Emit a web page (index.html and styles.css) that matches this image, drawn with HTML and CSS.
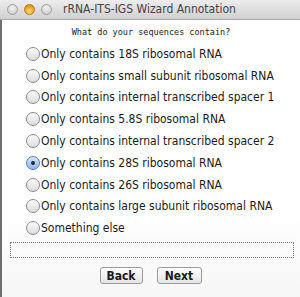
FILE: index.html
```html
<!DOCTYPE html>
<html lang="en">

<head>
    <meta charset="UTF-8">
    <title>rRNA-ITS-IGS Wizard Annotation</title>
    <link rel="stylesheet" href="styles.css">
</head>

<body>
    <div class="window">
        <div class="titlebar">
            <div class="lights">
                <span class="light"></span>
                <span class="light light-min"></span>
                <span class="light"></span>
            </div>
            <div class="title">rRNA-ITS-IGS Wizard Annotation</div>
        </div>
        <div class="content">
            <div class="question">What do your sequences contain?</div>
            <form class="choices">
                <label class="choice"><input type="radio" name="kind"><span class="radio"></span>Only contains 18S ribosomal RNA</label>
                <label class="choice"><input type="radio" name="kind"><span class="radio"></span>Only contains small subunit ribosomal RNA</label>
                <label class="choice"><input type="radio" name="kind"><span class="radio"></span>Only contains internal transcribed spacer 1</label>
                <label class="choice"><input type="radio" name="kind"><span class="radio"></span>Only contains 5.8S ribosomal RNA</label>
                <label class="choice"><input type="radio" name="kind"><span class="radio"></span>Only contains internal transcribed spacer 2</label>
                <label class="choice"><input type="radio" name="kind" checked><span class="radio"></span>Only contains 28S ribosomal RNA</label>
                <label class="choice"><input type="radio" name="kind"><span class="radio"></span>Only contains 26S ribosomal RNA</label>
                <label class="choice"><input type="radio" name="kind"><span class="radio"></span>Only contains large subunit ribosomal RNA</label>
                <label class="choice"><input type="radio" name="kind"><span class="radio"></span>Something else</label>
            </form>
            <div class="other"></div>
            <div class="buttons">
                <button type="button" class="btn btn-back">Back</button>
                <button type="button" class="btn">Next</button>
            </div>
        </div>
    </div>
</body>

</html>
```
FILE: styles.css
```css
html,
body {
    margin: 0;
    padding: 0;
    background: #ffffff;
}

.window {
    width: 300px;
    height: 297px;
    display: flex;
    flex-direction: column;
    font-family: "DejaVu Sans Condensed", "DejaVu Sans", sans-serif;
    font-stretch: condensed;
    color: #1a1a1a;
    border-left: 2px solid #6e6e6e;
    box-sizing: border-box;
}

.titlebar {
    height: 20px;
    flex: none;
    display: flex;
    align-items: center;
    background: linear-gradient(#ededed, #d0d0d0);
    border-bottom: 1px solid #a8a8a8;
    box-sizing: border-box;
    margin-left: -2px;
}

.lights {
    display: flex;
    gap: 6px;
    padding-left: 7px;
    margin-top: -1px;
}

.light {
    width: 11px;
    height: 11px;
    border-radius: 50%;
    background: radial-gradient(circle at 50% 35%, #f4f4f4, #c4c4c4);
    border: 1px solid #a0a0a0;
    box-sizing: border-box;
}

.light-min {
    background: radial-gradient(circle at 50% 70%, #ffe07a, #f0a020 60%, #c87a10);
    border-color: #b47a28;
}

.title {
    flex: 1;
    text-align: center;
    font-size: 12px;
    color: #444;
    margin-right: 53px;
    margin-top: -1px;
}

.content {
    flex: 1;
    background: linear-gradient(#ffffff 70%, #f6f6f6);
    padding: 0 6px 0 8px;
}

.question {
    font-family: "DejaVu Sans Mono", monospace;
    font-stretch: normal;
    font-size: 8.5px;
    text-align: center;
    margin-top: 7px;
    margin-left: -2px;
    margin-bottom: 6px;
}

.choices {
    display: flex;
    flex-direction: column;
}

.choice {
    display: flex;
    align-items: center;
    height: 21.8px;
    font-size: 12px;
    padding-left: 16px;
    white-space: nowrap;
}

.choice input {
    display: none;
}

.radio {
    width: 14px;
    height: 14px;
    border-radius: 50%;
    border: 1px solid #8c8c8c;
    background: linear-gradient(#fafafa, #dcdcdc);
    box-sizing: border-box;
    margin-right: 1px;
    flex: none;
    display: flex;
    align-items: center;
    justify-content: center;
}

.choice input:checked + .radio {
    background: linear-gradient(#d6e8fb, #8ab6ea);
    border-color: #5a7fb0;
}

.choice input:checked + .radio::after {
    content: "";
    width: 4px;
    height: 4px;
    border-radius: 50%;
    background: #1d2a3a;
}

.other {
    height: 16px;
    border: 1px dotted #7a7a7a;
    box-sizing: border-box;
    margin: 3px 0 0 0;
}

.buttons {
    display: flex;
    justify-content: center;
    gap: 14px;
    margin-top: 9px;
    margin-left: -3px;
}

.btn {
    font-family: "DejaVu Sans Condensed", "DejaVu Sans", sans-serif;
    font-stretch: condensed;
    font-weight: bold;
    font-size: 12px;
    width: 45px;
    height: 17px;
    padding: 0;
    border: 1px solid #9a9a9a;
    border-radius: 3px;
    background: linear-gradient(#ffffff, #e4e4e4);
    color: #1a1a1a;
    line-height: 14px;
}

.btn-back {
    width: 43px;
}
```
